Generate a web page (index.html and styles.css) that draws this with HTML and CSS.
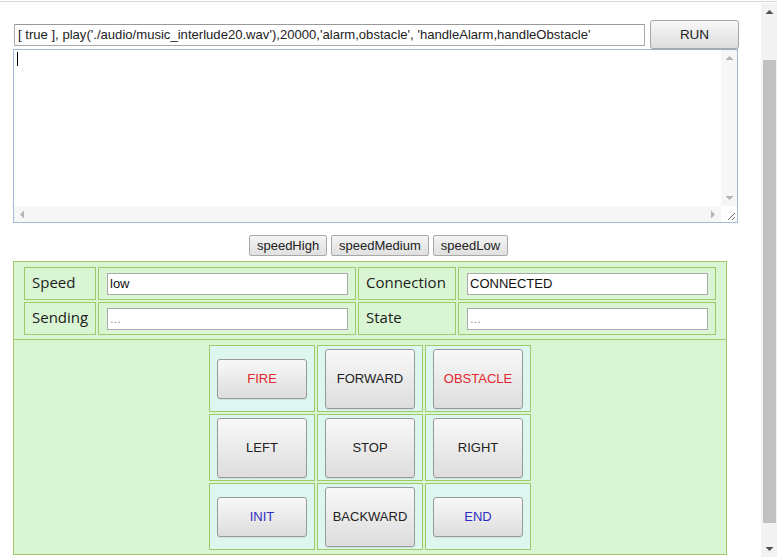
FILE: index.html
```html
<!DOCTYPE html>
<html>
<head>
<meta charset="utf-8">
<title>Robot control</title>
<link rel="stylesheet" href="styles.css">
</head>
<body>
<div class="topline"></div>
<div class="window">
  <main class="page">
    <div class="cmd">
      <input class="cmd-input" type="text" value="[ true ], play('./audio/music_interlude20.wav'),20000,'alarm,obstacle', 'handleAlarm,handleObstacle'">
      <button class="btn run">RUN</button>
    </div>
    <div class="console">
      <div class="console-text"><span class="caret"></span></div>
      <div class="vbar">
        <span class="arrow"><svg width="9" height="6" viewBox="0 0 9 6"><path d="M0.5 5 L4.5 1 L8.5 5 Z" fill="#b4b4b4"/></svg></span>
        <span class="arrow"><svg width="9" height="6" viewBox="0 0 9 6"><path d="M0.5 1 L4.5 5 L8.5 1 Z" fill="#b4b4b4"/></svg></span>
      </div>
      <div class="hbar">
        <span class="arrow"><svg width="6" height="9" viewBox="0 0 6 9"><path d="M5 0.5 L1 4.5 L5 8.5 Z" fill="#b4b4b4"/></svg></span>
        <span class="arrow"><svg width="6" height="9" viewBox="0 0 6 9"><path d="M1 0.5 L5 4.5 L1 8.5 Z" fill="#b4b4b4"/></svg></span>
      </div>
      <div class="corner"><svg width="16" height="16" viewBox="0 0 16 16"><path d="M14 7 L7 14 M14 11 L11 14" stroke="#6a6a6a" stroke-width="1"/></svg></div>
    </div>
    <div class="speeds">
      <button class="btn speed">speedHigh</button>
      <button class="btn speed">speedMedium</button>
      <button class="btn speed">speedLow</button>
    </div>
    <section class="panel">
      <div class="status">
        <div class="label">Speed</div>
        <div class="value"><input class="field" type="text" value="low"></div>
        <div class="label">Connection</div>
        <div class="value"><input class="field" type="text" value="CONNECTED"></div>
        <div class="label">Sending</div>
        <div class="value"><input class="field" type="text" placeholder="..."></div>
        <div class="label">State</div>
        <div class="value"><input class="field" type="text" placeholder="..."></div>
      </div>
      <div class="pad">
        <div class="cell"><button class="btn key red">FIRE</button></div>
        <div class="cell"><button class="btn key tall">FORWARD</button></div>
        <div class="cell"><button class="btn key tall red">OBSTACLE</button></div>
        <div class="cell"><button class="btn key tall">LEFT</button></div>
        <div class="cell"><button class="btn key tall">STOP</button></div>
        <div class="cell"><button class="btn key tall">RIGHT</button></div>
        <div class="cell"><button class="btn key blue">INIT</button></div>
        <div class="cell"><button class="btn key tall">BACKWARD</button></div>
        <div class="cell"><button class="btn key blue">END</button></div>
      </div>
    </section>
  </main>
  <div class="scroll">
    <div class="sb-btn"><svg width="9" height="6" viewBox="0 0 9 6"><path d="M0.5 5 L4.5 1 L8.5 5 Z" fill="#505050"/></svg></div>
    <div class="sb-track"><div class="sb-thumb"></div></div>
    <div class="sb-btn"><svg width="9" height="6" viewBox="0 0 9 6"><path d="M0.5 1 L4.5 5 L8.5 1 Z" fill="#505050"/></svg></div>
  </div>
</div>
</body>
</html>
```

FILE: styles.css
```css
html, body {
  margin: 0;
  padding: 0;
}

body {
  overflow: hidden;
  background: #ffffff;
  font-family: "Liberation Sans", Arial, sans-serif;
  font-size: 13px;
  color: #222222;
}

.topline {
  height: 1px;
  margin: 1px 0 1px;
  background: #d6d6d6;
}

.window {
  display: flex;
  height: 554px;
}

.page {
  flex: 1;
  min-width: 0;
  padding: 17px 0 0 13px;
}

/* command row */
.cmd {
  display: flex;
  align-items: center;
  height: 29px;
}

.cmd-input {
  margin-left: 1px;
  width: 631px;
  height: 22px;
  box-sizing: border-box;
  border: 1px solid #a9a9a9;
  border-top-color: #9a9a9a;
  padding: 0 3px;
  font: 13.1px "Liberation Sans", Arial, sans-serif;
  color: #222222;
  background: #ffffff;
  outline: none;
}

.btn {
  box-sizing: border-box;
  border: 1px solid #a8a8a8;
  border-radius: 3px;
  background: linear-gradient(#f8f8f8, #dddddd);
  font: 13px "Liberation Sans", Arial, sans-serif;
  color: #222222;
  padding: 0;
  box-shadow: 0 1px 1px rgba(0, 0, 0, 0.08);
}

.run {
  margin-left: 5px;
  width: 89px;
  height: 29px;
  font-size: 13.5px;
}

/* console (textarea look) */
.console {
  box-sizing: border-box;
  width: 725px;
  height: 174px;
  border: 1px solid #a6b8dc;
  display: grid;
  grid-template-columns: 1fr 16px;
  grid-template-rows: 1fr 16px;
  background: #ffffff;
}

.console-text {
  padding: 2px 3px;
}

.caret {
  display: block;
  width: 1px;
  height: 14px;
  background: #000000;
}

.vbar,
.hbar {
  background: #f6f6f6;
  display: flex;
  justify-content: space-between;
}

.vbar {
  flex-direction: column;
}

.arrow {
  width: 16px;
  height: 16px;
  display: flex;
  align-items: center;
  justify-content: center;
}

.corner {
  background: #ffffff;
  display: flex;
}

/* speed buttons */
.speeds {
  width: 725px;
  box-sizing: border-box;
  padding-left: 6px;
  margin-top: 12px;
  display: flex;
  justify-content: center;
  gap: 4px;
}

.speed {
  height: 21px;
  padding: 0 7px;
  border-radius: 2px;
  background: linear-gradient(#f4f4f4, #e0e0e0);
  box-shadow: none;
}

/* green panel */
.panel {
  margin-top: 5px;
  width: 714px;
  box-sizing: border-box;
  border: 1px solid #9ecb6a;
  background: #daf5d4;
}

.status {
  display: grid;
  grid-template-columns: 72px 258px 98px 258px;
  grid-auto-rows: 33px;
  gap: 2px;
  padding: 5px 10px 4px;
  border-bottom: 1px solid #9ecb6a;
}

.label,
.value {
  box-sizing: border-box;
  border: 1px solid #9ecb6a;
  display: flex;
  align-items: center;
}

.label {
  padding: 0 0 3px 7px;
  font: 15px "Open Sans", "Noto Sans", sans-serif;
  color: #1c1c1c;
}

.value {
  padding: 0 7px 0 8px;
}

.field {
  width: 100%;
  height: 22px;
  box-sizing: border-box;
  border: 1px solid #aaaaaa;
  padding: 0 2px;
  font: 13px "Liberation Sans", Arial, sans-serif;
  color: #111111;
  background: #ffffff;
  outline: none;
}

.field::placeholder {
  color: #9a9a9a;
}

.pad {
  display: grid;
  grid-template-columns: repeat(3, 106px);
  grid-auto-rows: 67px;
  gap: 2px;
  justify-content: center;
  padding: 5px 0 4px;
}

.cell {
  border: 1px solid #9ecb6a;
  background: #ddf6f0;
  display: flex;
  align-items: center;
  justify-content: center;
}

.key {
  width: 90px;
  height: 40px;
  border-color: #9a9a9a;
}

.key.tall {
  height: 60px;
}

.red {
  color: #e2262b;
}

.blue {
  color: #2d2dc2;
}

/* page scrollbar */
.scroll {
  width: 16px;
  display: flex;
  flex-direction: column;
  background: #f3f3f3;
}

.sb-btn {
  height: 17px;
  display: flex;
  align-items: center;
  justify-content: center;
}

.sb-track {
  flex: 1;
  padding-top: 40px;
}

.sb-thumb {
  height: 463px;
  margin: 0 1px 0 2px;
  background: #c1c1c1;
}
```
